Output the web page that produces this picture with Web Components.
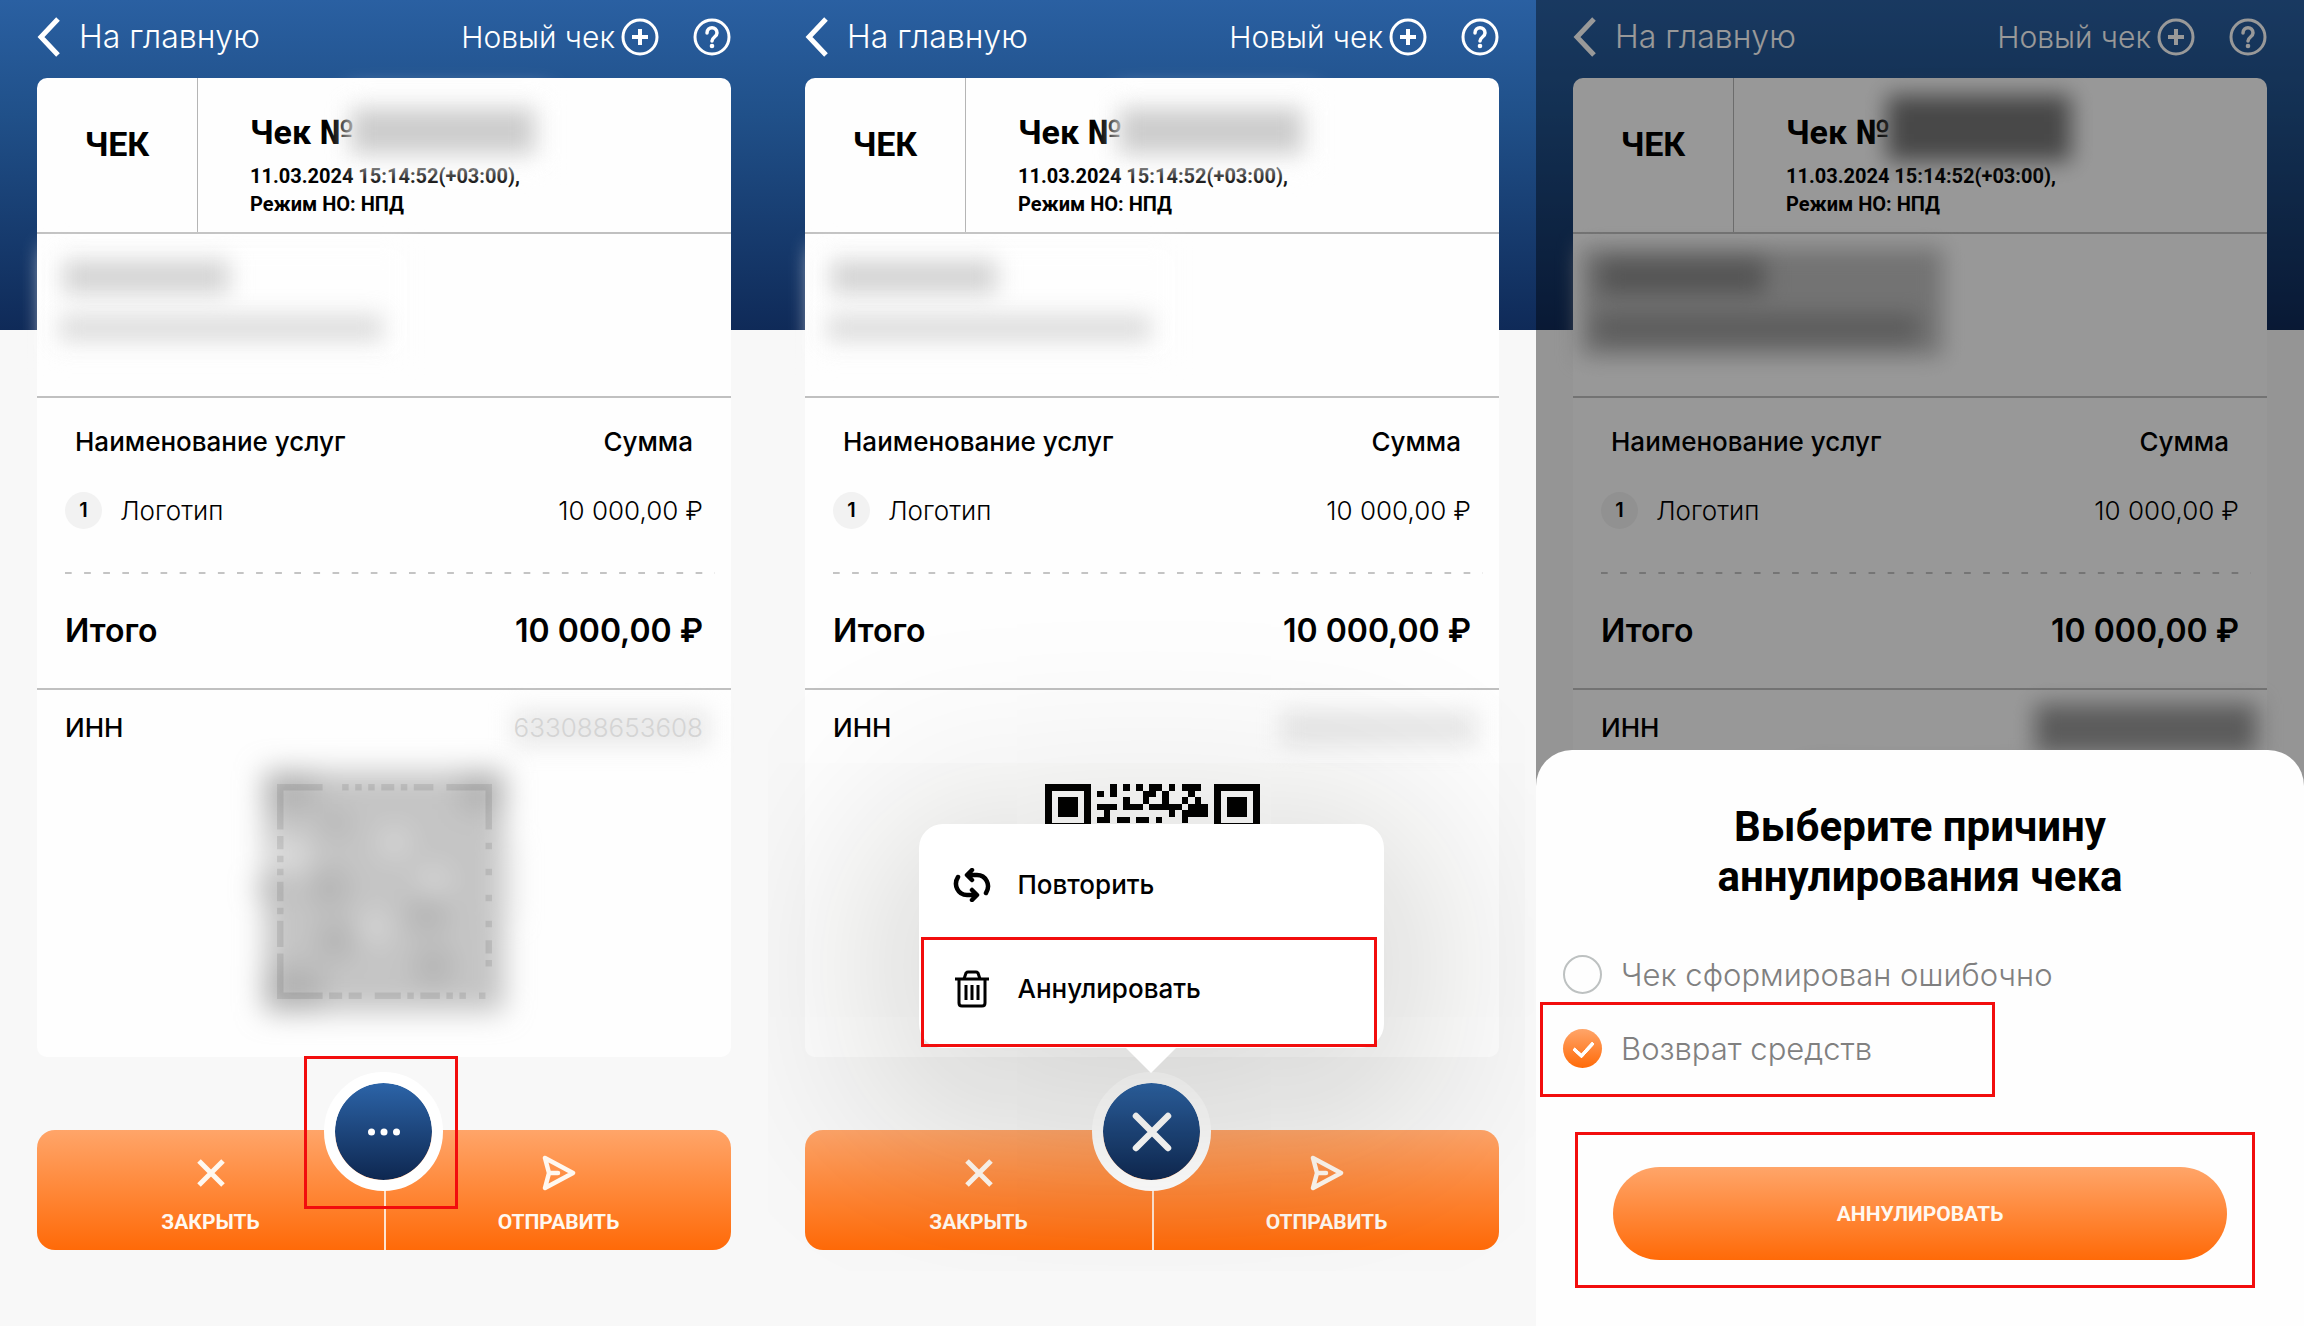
<!DOCTYPE html>
<html lang="ru">
<head>
<meta charset="utf-8">
<meta name="viewport" content="width=device-width, initial-scale=1">
<title>Аннулирование чека</title>
<style>
    body {
        margin: 0;
        min-height: 100vh;
        display: grid;
        grid-template-columns: repeat(3, 1fr);
        background: #f8f8f8;
        color: #000;
        font-family: Inter, "Liberation Sans", sans-serif;
        --heading: Roboto, "Liberation Sans", sans-serif;
    }
</style>
</head>
<body>

<phone-screen>
    <receipt-card qr="hidden"></receipt-card>
    <action-bar icon="dots">
        <red-mark style="inset: -16px -15px -18px -20px"></red-mark>
    </action-bar>
</phone-screen>

<phone-screen>
    <receipt-card qr="visible"></receipt-card>
    <action-bar icon="close">
        <action-menu></action-menu>
    </action-bar>
</phone-screen>

<phone-screen>
    <receipt-card qr="hidden" dark></receipt-card>
    <action-bar icon="dots"></action-bar>
    <cancel-sheet slot="sheet"></cancel-sheet>
</phone-screen>

<script>

const ICONS = {
    back:  ['0 0 24 40', '<path d="M21 2 4 20l17 18" stroke-width="5"/>'],
    plus:  ['0 0 38 38', '<circle cx="19" cy="19" r="17" stroke-width="3"/><path d="M19 11v16M11 19h16" stroke-width="4"/>'],
    help:  ['0 0 38 38', '<circle cx="19" cy="19" r="17" stroke-width="3"/><path d="M14 15c0-7 10-7 10 0 0 4-5 4-5 8" stroke-width="3.5" stroke-linecap="round"/><circle cx="19" cy="28" r="2.3" fill="currentColor" stroke="none"/>'],
    cross: ['0 0 30 30', '<path d="M3 3l24 24M27 3L3 27" stroke-width="5"/>'],
    send:  ['0 0 34 36', '<path d="M3 3l28 15L3 33l4-15zM7 18h9" stroke-width="4.5" stroke-linecap="round" stroke-linejoin="round"/>'],
    close: ['0 0 40 40', '<path d="M4 4l32 32M36 4L4 36" stroke-width="6.5" stroke-linecap="round"/>'],
    dots:  ['0 0 40 40', '<g fill="currentColor" stroke="none"><circle cx="7.500" cy="20" r="3.500"/><circle cx="20" cy="20" r="3.500"/><circle cx="32.500" cy="20" r="3.500"/></g>'],
    repeat:['0 0 38 34', '<g stroke-width="4.500" stroke-linecap="round" stroke-linejoin="round"><path d="M5 9C0 17 5 27 14 27h9M19 22l5 5-5 5M33 25c5-8 0-18-9-18h-9M19 2l-5 5 5 5"/></g>'],
    trash: ['0 0 34 38', '<g stroke-width="3"><path d="M0 9h34" /><path d="M4 9v24q0 3 3 3h20q3 0 3-3V9M9 9l2-6q1-1 2-1h8q1 0 2 1l2 6" stroke-linejoin="round"/><path d="M11 15v15M17 15v15M23 15v15"/></g>'],
};


class BaseElement extends HTMLElement {
    constructor() {
        super();
        this.attachShadow({ mode: 'open' });
    }

    connectedCallback() {
        this.shadowRoot.innerHTML = this.render();
    }
}


customElements.define("ui-icon", class extends BaseElement {
    render() {
        const [box, shape] = ICONS[this.getAttribute("name")];
        const [, , w, h] = box.split(" ");
        return `
            <style>
                :host { display: inline-flex; }
                svg { fill: none; stroke: currentColor; }
            </style>
            <svg width="${w}" height="${h}" viewBox="${box}" aria-hidden="true">${shape}</svg>`;
    }
});


// Red frame over the thing to tap
customElements.define("red-mark", class extends BaseElement {
    render() {
        return `
            <style>
                :host {
                    position: absolute;
                    border: 3px solid #f20d0d;
                    pointer-events: none;
                }
            </style>`;
    }
});


customElements.define("phone-screen", class extends BaseElement {
    render() {
        return `
            <style>
                :host {
                    position: relative;
                    display: block;
                    overflow: hidden;
                    box-sizing: border-box;
                    padding: 0 37px;
                    background: linear-gradient(#2a60a2, #205089 35%, #0f2a58) 0 0 / 100% 330px no-repeat, #f8f8f8;
                }
                header {
                    display: flex;
                    align-items: center;
                    height: 74px;
                    margin-bottom: 4px;
                    color: #fff;
                }
                a, button {
                    display: flex;
                    align-items: center;
                    padding: 0;
                    border: 0;
                    background: none;
                    color: inherit;
                    font: 300 30px/36px Inter, sans-serif;
                    text-decoration: none;
                }
                a { gap: 18px; margin-right: auto; font-size: 32px; }
                .new { gap: 6px; margin-right: 34px; }
            </style>
            <header>
                <a href="#"><ui-icon name="back"></ui-icon>На главную</a>
                <button class="new">Новый чек<ui-icon name="plus"></ui-icon></button>
                <button aria-label="?"><ui-icon name="help"></ui-icon></button>
            </header>
            <slot></slot>
            <slot name="sheet"></slot>`;
    }
});


customElements.define("qr-code", class extends BaseElement {
    // [row, from column, to column]
    rows = [
        [0,10,10],[0,12,12],[0,14,14],[0,16,17],[0,19,19],[0,21,23],
        [1,8,8],[1,10,10],[1,15,16],[1,18,18],[1,22,22],
        [2,12,12],[2,15,15],[2,18,18],[2,21,21],[2,23,23],
        [3,8,10],[3,12,14],[3,16,20],[3,22,24],
        [4,9,9],[4,19,19],[4,21,24],
        [5,8,9],[5,11,12],[5,14,15],[5,17,17],[5,21,21],
    ];
    edge = [
        [0,0,6],[0,10,10],[0,12,12],[0,14,14],[0,16,17],[0,19,19],[0,21,23],[0,26,32],
        [32,0,6],[32,8,9],[32,11,12],[32,15,18],[32,20,20],[32,22,24],[32,26,26],[32,28,28],[32,31,31],
    ];
    left  = [1,2,3,4,5,6,8,9,11,13,15,16,17,19,21,22,23,24,26,27,28,29,30,31];
    right = [1,2,3,4,5,6,9,13,17,21,24,25,27];

    cells(list) {
        return list.map(([r, a, b]) => `M${a} ${r}h${b - a + 1}v1h${a - b - 1}z`).join("");
    }

    finder(x, y) {
        return `M${x} ${y}h7v7h-7zM${x + 1} ${y + 1}v5h5v-5zM${x + 2} ${y + 2}h3v3h-3z`;
    }

    render() {
        const style = `
            <style>
                :host { display: block; }
                svg { display: block; overflow: visible; }
            </style>`;

        if (this.getAttribute("state") == "visible")
            return style + `
                <svg width="215" height="215" viewBox="0 0 33 33" shape-rendering="crispEdges">
                    <path d="${this.finder(0,0)}${this.finder(26,0)}${this.finder(0,26)}${this.cells(this.rows)}"/>
                </svg>`;

        const border = this.edge.concat(
            this.left.map(r => [r, 0, 0]),
            this.right.map(r => [r, 32, 32]));

        return style + `
            <svg width="215" height="215" viewBox="0 0 33 33">
                <defs>
                    <filter id="soft" x="-30%" y="-30%" width="160%" height="160%"><feGaussianBlur stdDeviation="2.1"/></filter>
                </defs>
                <g filter="url(#soft)">
                    <rect x="-2" y="-2" width="37" height="37" rx="1" fill="#c5c5c5"/>
                    <g fill="#b2b2b2">
                        <rect x="-2" y="-2" width="8" height="6"/><rect x="28" y="-2" width="7" height="6"/>
                        <rect x="-2" y="28" width="9" height="7"/><circle cx="8" cy="16" r="3"/>
                        <circle cx="9" cy="24" r="3"/><circle cx="23" cy="20" r="3"/><circle cx="24" cy="28" r="3"/>
                        <circle cx="9" cy="6" r="2"/><circle cx="-1" cy="16" r="2"/>
                    </g>
                    <g fill="#dcdcdc">
                        <circle cx="2" cy="11" r="3"/><circle cx="18" cy="9" r="2"/><circle cx="15" cy="22" r="2"/>
                        <circle cx="24" cy="15" r="2"/><rect x="34" y="9" width="2" height="12"/>
                    </g>
                </g>
                <path d="${this.cells(border)}" fill="#000" opacity=".09"/>
            </svg>`;
    }
});


customElements.define("receipt-card", class extends BaseElement {
    render() {
        const state = this.getAttribute("qr");
        const inn = state == "hidden" && !this.hasAttribute("dark") ? "633088653608" : "";
        return `
            <style>
                :host {
                    display: block;
                    background: #fefefe;
                    border-radius: 10px;
                    --haze: #fefefe;
                    --smear: #d4d4d4;
                    --number: #cdcdcd;
                    --inn: #e9e9e9;
                }
                :host([dark]) {
                    --haze: #c0c0c0;
                    --smear: #8c8c8c;
                    --number: #787878;
                    --inn: #999;
                }
                section { position: relative; border-bottom: 2px solid #c0c0c0; }
                section:last-child { border: 0; }
                .head {
                    display: grid;
                    grid-template-columns: 161px 1fr;
                    font: bold 34px/40px var(--heading);
                }
                .kind {
                    display: grid;
                    place-items: center;
                    border-right: 1px solid #b5b5b5;
                    box-sizing: border-box;
                    padding-bottom: 22px;
                }
                .info { padding: 34px 0 14px 52px; }
                h2, p { margin: 0; font: inherit; }
                .info p { font-size: 20px; line-height: 28px; padding-top: 10px; }
                .person { height: 162px; }
                .blur { position: absolute; filter: blur(11px); background: var(--smear); }
                .number { left: 314px; top: 30px; width: 184px; height: 46px; background: var(--number); }
                .veil { left: 312px; top: 14px; width: 200px; height: 80px; background: #fefefe; }
                :host([dark]) .number { top: 17px; height: 66px; }
                :host([dark]) .veil { display: none; }
                .name { left: 8px; top: 14px; width: 362px; height: 108px; background: var(--haze); }
                .first { left: 26px; top: 26px; width: 166px; height: 34px; }
                .second { left: 22px; top: 80px; width: 324px; height: 28px; opacity: .75; }
                .services { padding: 0 28px; }
                table { width: 100%; border-collapse: collapse; font-size: 26px; }
                th { height: 86px; padding: 0 10px; font-weight: 500; text-align: left; }
                td { height: 52px; padding: 0; font-weight: 300; }
                th:last-child, td:last-child { text-align: right; }
                .item { display: flex; align-items: center; gap: 18px; }
                .item b {
                    width: 37px;
                    border-radius: 50%;
                    background: #f2f2f2;
                    font: 600 20px/37px Inter, sans-serif;
                    text-align: center;
                }
                .dash {
                    height: 2px;
                    margin: 36px -12px 0 0;
                    background: linear-gradient(90deg, #c4c4c4 33%, transparent 0) 0 0 / 19px 2px round;
                }
                .total {
                    display: flex;
                    justify-content: space-between;
                    font: 600 32px/114px Inter, sans-serif;
                }
                .foot { padding: 0 28px 58px; }
                .inn {
                    display: flex;
                    justify-content: space-between;
                    font-size: 26px;
                    line-height: 76px;
                    font-weight: 500;
                }
                .inn span { position: relative; font-weight: 300; color: #d4d4d4; }
                .tax { right: 22px; top: 20px; width: 196px; height: 36px; background: var(--inn); }
                :host([dark]) .tax { width: 222px; height: 50px; top: 14px; right: 10px; }
                qr-code { width: 215px; margin: 18px auto 0; }
            </style>
            <section class="head">
                <div class="kind">ЧЕК</div>
                <div class="info">
                    <h2>Чек №</h2>
                    <p>11.03.2024 15:14:52(+03:00),<br>Режим НО: НПД</p>
                </div>
                <div class="blur veil" style="opacity:.7"></div>
                <div class="blur number"></div>
            </section>
            <section class="person">
                <div class="blur name"></div>
                <div class="blur first"></div>
                <div class="blur second"></div>
            </section>
            <section class="services">
                <table>
                    <thead><tr><th>Наименование услуг</th><th>Сумма</th></tr></thead>
                    <tbody><tr>
                        <td><div class="item"><b>1</b>Логотип</div></td>
                        <td>10 000,00 ₽</td>
                    </tr></tbody>
                </table>
                <div class="dash"></div>
                <div class="total"><span>Итого</span><span>10 000,00 ₽</span></div>
            </section>
            <section class="foot">
                <div class="blur tax"></div>
                <div class="inn">ИНН<span>${inn}</span></div>
                <qr-code state="${state}"></qr-code>
            </section>`;
    }
});


customElements.define("action-bar", class extends BaseElement {
    render() {
        return `
            <style>
                :host {
                    position: relative;
                    display: grid;
                    grid-template-columns: 1fr 1fr;
                    height: 120px;
                    margin-top: 73px;
                    border-radius: 18px;
                    background: linear-gradient(#ffa569, #ff6a08);
                }
                .side {
                    display: flex;
                    flex-direction: column;
                    align-items: center;
                    gap: 15px;
                    padding: 25px 0 0;
                    border: 0;
                    background: none;
                    color: #fff8f0;
                    font: bold 21px/32px var(--heading);
                }
                .side + .side { border-left: 2px solid #ffe3cf; }
                ui-icon { height: 36px; align-items: center; }
                .more {
                    position: absolute;
                    left: 50%;
                    top: -58px;
                    width: 119px;
                    height: 119px;
                    margin-left: -60px;
                }
                .more button {
                    display: grid;
                    place-items: center;
                    width: 100%;
                    height: 100%;
                    border: 11px solid #fff;
                    border-radius: 50%;
                    background: linear-gradient(#2c64a8, #0e2750) padding-box;
                    color: #fff;
                }
            </style>
            <button class="side"><ui-icon name="cross"></ui-icon>ЗАКРЫТЬ</button>
            <button class="side"><ui-icon name="send"></ui-icon>ОТПРАВИТЬ</button>
            <div class="more">
                <button aria-label="Меню"><ui-icon name="${this.getAttribute("icon")}"></ui-icon></button>
                <slot></slot>
            </div>`;
    }
});


customElements.define("action-menu", class extends BaseElement {
    render() {
        return `
            <style>
                :host {
                    position: absolute;
                    left: 50%;
                    bottom: calc(100% + 24px);
                    width: 465px;
                    margin-left: -233px;
                    padding: 9px 0 7px;
                    box-sizing: border-box;
                    border-radius: 24px;
                    background: #fff;
                    box-shadow: 0 30px 200px 40px rgba(20, 20, 12, .18);
                }
                :host::after {
                    content: "";
                    position: absolute;
                    left: calc(50% - 25px);
                    top: 100%;
                    border: solid transparent;
                    border-width: 25px 25px 0;
                    border-top-color: #fff;
                }
                button {
                    display: flex;
                    align-items: center;
                    gap: 27px;
                    width: 100%;
                    height: 104px;
                    padding: 0 34px;
                    border: 0;
                    background: none;
                    color: #000;
                    font: 500 26px/32px Inter, sans-serif;
                }
                ui-icon { width: 38px; justify-content: center; }
                div { position: relative; }
            </style>
            <button><ui-icon name="repeat"></ui-icon>Повторить</button>
            <div>
                <button><ui-icon name="trash"></ui-icon>Аннулировать</button>
                <red-mark style="inset: 0 7px -6px 2px"></red-mark>
            </div>`;
    }
});


customElements.define("cancel-sheet", class extends BaseElement {
    render() {
        return `
            <style>
                :host {
                    position: absolute;
                    inset: 0;
                    display: flex;
                    flex-direction: column;
                    justify-content: flex-end;
                    background: rgba(0, 0, 0, .4);
                }
                form {
                    padding: 52px 0 66px;
                    border-radius: 36px 36px 0 0;
                    background: #fefefe;
                }
                h1 {
                    margin: 0 0 35px;
                    font: bold 42px/50px var(--heading);
                    text-align: center;
                }
                label {
                    position: relative;
                    display: flex;
                    align-items: center;
                    gap: 19px;
                    height: 74px;
                    padding-left: 27px;
                    color: #808080;
                    font-size: 31px;
                    font-weight: 300;
                }
                input {
                    appearance: none;
                    width: 39px;
                    height: 39px;
                    margin: 0;
                    border: 2px solid #bdc1c1;
                    border-radius: 50%;
                }
                input:checked {
                    border: 0;
                    background: linear-gradient(#ffa569, #ff6a08);
                }
                /* tick */
                input:checked::after {
                    content: "";
                    display: block;
                    width: 9px;
                    height: 16px;
                    margin: 8px 0 0 14px;
                    border: solid #fff;
                    border-width: 0 4px 4px 0;
                    border-radius: 2px;
                    transform: rotate(42deg);
                    box-sizing: content-box;
                }
                .submit { position: relative; margin: 82px 77px 0; }
                button {
                    width: 100%;
                    height: 93px;
                    border: 0;
                    border-radius: 47px;
                    background: linear-gradient(#ffa569, #ff6a08);
                    color: #fff8f0;
                    font: bold 21px/32px var(--heading);
                }
            </style>
            <form>
                <h1>Выберите причину<br>аннулирования чека</h1>
                <label><input type="radio" name="reason">Чек сформирован ошибочно</label>
                <label>
                    <input type="radio" name="reason" checked>Возврат средств
                    <red-mark style="inset: -9px auto -12px 4px; width: 449px"></red-mark>
                </label>
                <div class="submit">
                    <button type="button">АННУЛИРОВАТЬ</button>
                    <red-mark style="inset: -35px -28px -28px -38px"></red-mark>
                </div>
            </form>`;
    }
});

</script>
</body>
</html>
